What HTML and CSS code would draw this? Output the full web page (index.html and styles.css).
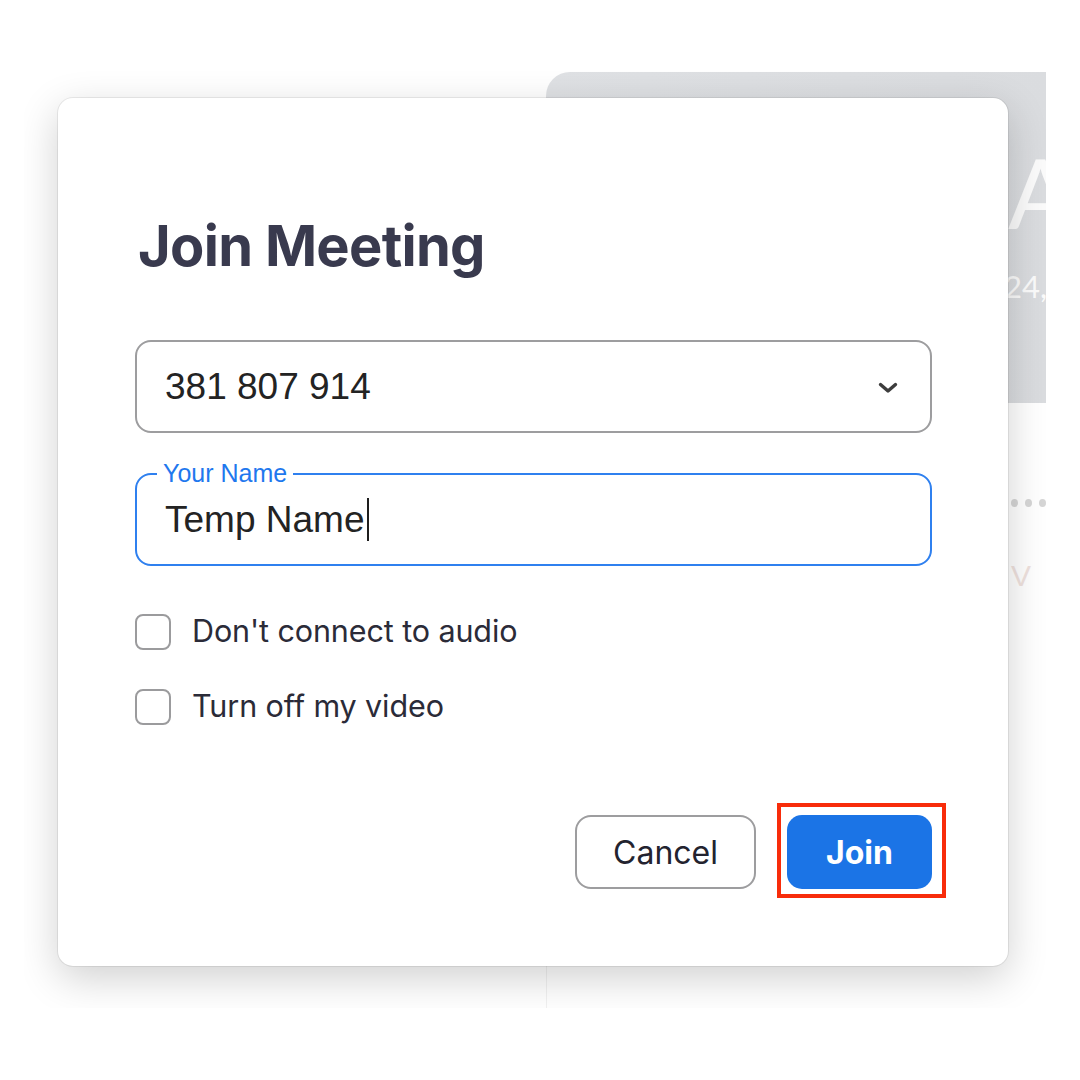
FILE: index.html
```html
<!DOCTYPE html>
<html lang="en">
<head>
<meta charset="utf-8">
<title>Join Meeting</title>
<link rel="stylesheet" href="styles.css">
</head>
<body>
<div class="screen">
  <div class="app">
    <div class="app-left"></div>
    <div class="app-right">
      <div class="hero">
        <div class="hero-big">A</div>
        <div class="hero-small">24,</div>
      </div>
      <div class="list">
        <div class="dots"><span></span><span></span><span></span></div>
        <div class="faint">V</div>
      </div>
    </div>
  </div>

  <div class="dialog">
    <h1 class="title">Join Meeting</h1>

    <div class="field select">
      <span class="field-text">381 807 914</span>
      <svg class="chevron" width="20" height="12" viewBox="0 0 20 12">
        <polyline points="2.5,2.5 10,9 17.5,2.5" fill="none" stroke="#3d3d3d" stroke-width="3.4" stroke-linecap="round" stroke-linejoin="round"/>
      </svg>
    </div>

    <div class="field name">
      <span class="field-label">Your Name</span>
      <span class="field-text">Temp Name</span><span class="caret"></span>
    </div>

    <div class="checks">
      <div class="check"><span class="box"></span><span class="check-label">Don't connect to audio</span></div>
      <div class="check"><span class="box"></span><span class="check-label">Turn off my video</span></div>
    </div>

    <div class="actions">
      <button class="btn btn-cancel">Cancel</button>
      <div class="join-wrap">
        <button class="btn btn-join">Join</button>
        <span class="highlight"></span>
      </div>
    </div>
  </div>
</div>
</body>
</html>
```

FILE: styles.css
```css
* { box-sizing: border-box; }

html, body {
  margin: 0;
  padding: 0;
  background: #ffffff;
}

body {
  width: 1080px;
  height: 1080px;
  overflow: hidden;
  font-family: "Inter", "Noto Sans", sans-serif;
}

.screen {
  position: relative;
  margin: 62px 0 0 24px;
  width: 1022px;
  height: 946px;
  overflow: hidden;
  background: #ffffff;
}

.app {
  display: grid;
  grid-template-columns: 522px 500px;
  height: 100%;
}

.app-right {
  display: flex;
  flex-direction: column;
  padding-top: 10px;
}

.hero {
  height: 331px;
  background: linear-gradient(90deg, #dfe1e4 0%, #dadcdf 100%);
  border-top-left-radius: 24px;
  padding: 72px 0 0 462px;
  color: #fbfbfb;
  font-family: "Lato", "Liberation Sans", sans-serif;
  font-weight: 400;
  white-space: nowrap;
}

.hero-big {
  font-size: 96px;
  line-height: 96px;
}

.hero-small {
  margin-top: 31px;
  margin-left: -4px;
  font-size: 31px;
  line-height: 31px;
}

.list {
  flex: 1;
  border-left: 1px solid #f1f1f1;
  padding: 96px 0 0 464px;
}

.dots {
  display: flex;
  gap: 7px;
}

.dots span {
  width: 8px;
  height: 8px;
  border-radius: 50%;
  background: #d6d6d6;
}

.faint {
  margin-top: 52px;
  font-family: "Liberation Sans", sans-serif;
  font-size: 30px;
  color: #efe2de;
}

/* dialog (modal over the app) */
.dialog {
  position: absolute;
  left: 34px;
  top: 36px;
  width: 950px;
  height: 868px;
  background: #ffffff;
  border-radius: 15px;
  box-shadow: 0 0 0 1px rgba(0, 0, 0, 0.07), 0 12px 40px rgba(0, 0, 0, 0.19);
  padding: 120px 76px 0 77px;
  display: flex;
  flex-direction: column;
}

.title {
  margin: 0 0 66px 3px;
  font-size: 56px;
  line-height: 56px;
  font-weight: 700;
  color: #393a4e;
  letter-spacing: -0.7px;
}

.field {
  position: relative;
  height: 93px;
  border-radius: 16px;
  display: flex;
  align-items: center;
  padding: 0 32px 0 28px;
  font-family: "Liberation Sans", "Arial", sans-serif;
  font-size: 37px;
  color: #232323;
}

.select {
  border: 2px solid #9d9d9f;
}

.select .field-text { flex: 1; }

.chevron {
  display: block;
  margin-top: 2px;
}

.name {
  margin-top: 40px;
  border: 2px solid #2f80ef;
}

.field-label {
  position: absolute;
  left: 20px;
  top: -14px;
  padding: 0 6px;
  background: #ffffff;
  font-size: 25px;
  line-height: 25px;
  color: #1f78ee;
}

.caret {
  display: inline-block;
  width: 2px;
  height: 43px;
  margin-left: 3px;
  background: #1e1e1e;
}

.checks {
  margin-top: 48px;
  display: flex;
  flex-direction: column;
  gap: 39px;
}

.check {
  display: flex;
  align-items: center;
  gap: 21px;
  height: 36px;
}

.box {
  width: 36px;
  height: 36px;
  border: 2px solid #9b9b9d;
  border-radius: 8px;
  flex: none;
}

.check-label {
  font-size: 30.5px;
  color: #2b2b38;
  white-space: nowrap;
  margin-top: -4px;
  letter-spacing: -0.1px;
}

.actions {
  margin-top: 90px;
  display: flex;
  justify-content: flex-end;
  gap: 31px;
}

.btn {
  font-family: "Inter", "Noto Sans", sans-serif;
  font-size: 32px;
  border-radius: 16px;
  height: 74px;
  cursor: pointer;
  padding: 0;
}

.btn-cancel {
  width: 181px;
  border: 2px solid #9d9d9f;
  background: #ffffff;
  color: #23232f;
}

.join-wrap {
  position: relative;
}

.btn-join {
  width: 145px;
  border: none;
  background: #1b74e6;
  color: #ffffff;
  font-weight: 700;
  border-radius: 15px;
}

.highlight {
  position: absolute;
  left: -10px;
  right: -14px;
  top: -12px;
  bottom: -9px;
  border: 4px solid #f82c0a;
  pointer-events: none;
}
```
